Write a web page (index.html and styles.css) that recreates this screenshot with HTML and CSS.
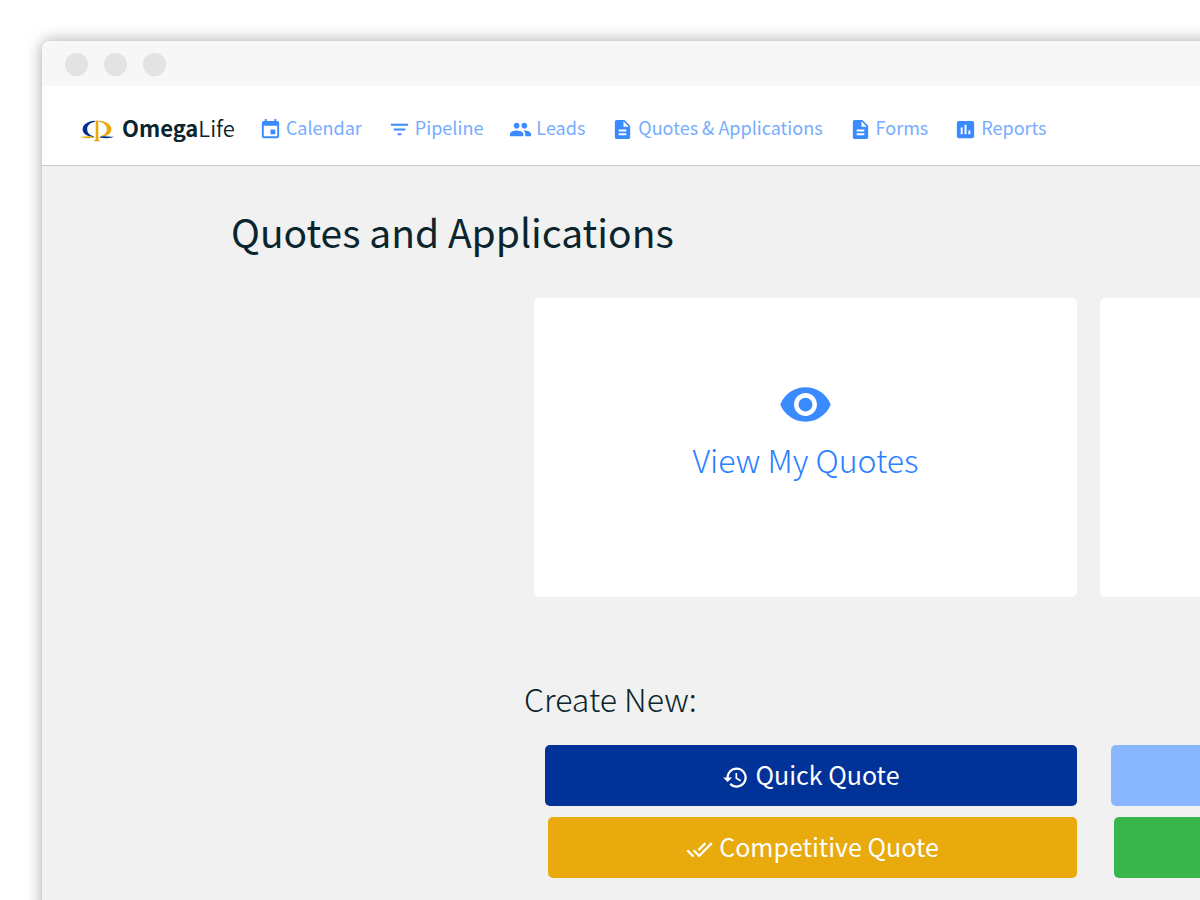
FILE: index.html
```html
<!DOCTYPE html>
<html lang="en">
<head>
<meta charset="utf-8">
<title>OmegaLife - Quotes and Applications</title>
<link rel="stylesheet" href="styles.css">
</head>
<body>
<div class="window">
  <div class="titlebar"><span class="dot"></span><span class="dot"></span><span class="dot"></span></div>
  <header class="navbar">
    <a class="brand" href="#">
      <svg class="brand-mark" viewBox="0 0 104 66" aria-hidden="true">
        <path fill="#012f96" d="M46 2C23 3 8 14 8 28c0 13 13 22 34 24v-3c-13-3-20-10-20-21C22 16 30 8 46 5z"/>
        <path fill="#e9a90b" d="M58 2c23 1 38 12 38 26 0 13-13 22-34 24v-3c13-3 20-10 20-21C82 16 74 8 58 5z"/>
        <path fill="#e9a90b" d="M0 50c12 2 22-2 33-1 6 1 11 3 14 5-10-1-15 0-23 1-10 0-20-1-24-5z"/>
        <path fill="#012f96" d="M104 50c-12 2-22-2-33-1-6 1-11 3-14 5 10-1 15 0 23 1 10 0 20-1 24-5z"/>
        <path fill="#e9a90b" d="M48 1h8v57l6 6H42l6-6z"/>
      </svg>
      <span class="brand-name"><b>Omega</b>Life</span>
    </a>
    <nav class="nav">
      <a class="nav-link" href="#"><svg class="icon" viewBox="0 0 24 24"><path d="M17 12h-5v5h5v-5zM16 1v2H8V1H6v2H5c-1.110 0-1.990.9-1.990 2L3 19c0 1.100.89 2 2 2h14c1.100 0 2-.9 2-2V5c0-1.100-.9-2-2-2h-1V1h-2zm3 18H5V8h14v11z"/></svg>Calendar</a>
      <a class="nav-link" href="#"><svg class="icon" viewBox="0 0 24 24"><path d="M10 18h4v-2h-4v2zM3 6v2h18V6H3zm3 7h12v-2H6v2z"/></svg>Pipeline</a>
      <a class="nav-link" href="#"><svg class="icon" viewBox="0 0 24 24"><path d="M16 11c1.660 0 2.990-1.340 2.990-3S17.660 5 16 5s-3 1.340-3 3 1.340 3 3 3zm-8 0c1.660 0 2.990-1.340 2.990-3S9.660 5 8 5 5 6.340 5 8s1.340 3 3 3zm0 2c-2.330 0-7 1.170-7 3.500V19h14v-2.500c0-2.330-4.670-3.500-7-3.500zm8 0c-.29 0-.62.02-.97.05 1.160.84 1.970 1.970 1.970 3.450V19h6v-2.500c0-2.330-4.670-3.500-7-3.500z"/></svg>Leads</a>
      <a class="nav-link" href="#"><svg class="icon" viewBox="0 0 24 24"><path d="M14 2H6c-1.100 0-1.990.9-1.990 2L4 20c0 1.100.89 2 1.990 2H18c1.100 0 2-.9 2-2V8l-6-6zm2 16H8v-2h8v2zm0-4H8v-2h8v2zm-3-5V3.500L18.500 9H13z"/></svg>Quotes &amp; Applications</a>
      <a class="nav-link" href="#"><svg class="icon" viewBox="0 0 24 24"><path d="M14 2H6c-1.100 0-1.990.9-1.990 2L4 20c0 1.100.89 2 1.990 2H18c1.100 0 2-.9 2-2V8l-6-6zm2 16H8v-2h8v2zm0-4H8v-2h8v2zm-3-5V3.500L18.500 9H13z"/></svg>Forms</a>
      <a class="nav-link" href="#"><svg class="icon" viewBox="0 0 24 24"><path d="M19 3H5c-1.100 0-2 .9-2 2v14c0 1.100.9 2 2 2h14c1.100 0 2-.9 2-2V5c0-1.100-.9-2-2-2zM9 17H7v-7h2v7zm4 0h-2V7h2v10zm4 0h-2v-4h2v4z"/></svg>Reports</a>
    </nav>
  </header>
  <main class="content">
    <h1 class="page-title">Quotes and Applications</h1>
    <section class="panel">
      <div class="columns">
        <a class="card" href="#">
          <svg class="card-icon" viewBox="0 0 24 24" aria-hidden="true"><path d="M12 4.500C7 4.500 2.730 7.610 1 12c1.730 4.390 6 7.500 11 7.500s9.270-3.110 11-7.500c-1.730-4.390-6-7.500-11-7.500zM12 17c-2.760 0-5-2.240-5-5s2.240-5 5-5 5 2.240 5 5-2.240 5-5 5zm0-8c-1.660 0-3 1.340-3 3s1.340 3 3 3 3-1.340 3-3-1.340-3-3-3z"/></svg>
          View My Quotes
        </a>
        <div class="card"></div>
      </div>
      <h2 class="section-title">Create New:</h2>
      <div class="columns">
        <button class="btn navy"><svg class="btn-icon" viewBox="0 0 24 24" aria-hidden="true"><path d="M13 3c-4.970 0-9 4.030-9 9H1l3.890 3.890.07.14L9 12H6c0-3.870 3.130-7 7-7s7 3.130 7 7-3.130 7-7 7c-1.930 0-3.680-.79-4.940-2.060l-1.420 1.420C8.270 19.990 10.510 21 13 21c4.970 0 9-4.030 9-9s-4.030-9-9-9zm-1 5v5l4.280 2.540.72-1.210-3.500-2.080V8H12z"/></svg>Quick Quote</button>
        <button class="btn sky" aria-label="More"></button>
        <button class="btn gold inset"><svg class="btn-icon" viewBox="0 0 24 24" aria-hidden="true"><path d="M18 7l-1.410-1.410-6.340 6.340 1.410 1.410L18 7zm4.240-1.410L11.660 16.170 7.480 12l-1.410 1.410L11.660 19l12-12-1.420-1.410zM.41 13.410L6 19l1.410-1.410L1.830 12 .41 13.410z"/></svg>Competitive Quote</button>
        <button class="btn green inset" aria-label="More"></button>
      </div>
    </section>
  </main>
</div>
</body>
</html>
```
FILE: styles.css
```css
* { box-sizing: border-box; }

body {
  margin: 0;
  padding: 41px 0 0 42px;
  min-height: 100vh;
  display: flex;
  background: #fff;
  color: #0a252d;
  font-family: "Noto Sans CJK SC", "Noto Sans", sans-serif;
  overflow: hidden;
}

a { text-decoration: none; }

.window {
  flex: 1;
  min-width: 0;
  margin: 0 -24px -24px 0;
  display: flex;
  flex-direction: column;
  background: #f1f1f1;
  border-top-left-radius: 8px;
  box-shadow: 0 0 16px rgba(0, 0, 0, 0.36);
}

.titlebar {
  display: flex;
  align-items: center;
  gap: 16px;
  height: 45px;
  padding: 2px 23px 0;
  background: #f7f7f7;
  border-top-left-radius: 8px;
}

.dot {
  width: 23px;
  height: 23px;
  border-radius: 50%;
  background: #e3e3e3;
}

.navbar {
  display: flex;
  align-items: center;
  gap: 24px;
  height: 80px;
  padding: 2px 38px 0;
  background: #fff;
  border-bottom: 1px solid #c9c9c9;
  white-space: nowrap;
}

.brand {
  display: flex;
  align-items: center;
  gap: 8px;
  color: #0a252d;
}

.brand-mark { width: 34px; height: 22px; margin-top: 8px; }
.brand-name { font-size: 22px; line-height: 32px; font-weight: 350; }
.brand-name b { font-weight: 700; }

.nav { display: flex; gap: 26px; }

.nav-link {
  display: flex;
  align-items: center;
  gap: 4px;
  color: #76adff;
  font-size: 18px;
  line-height: 28px;
}

.icon { width: 23px; height: 23px; fill: #3a8bff; margin-top: 5px; }

.content { padding-top: 35px; }

.page-title {
  margin: 0 0 37px 189px;
  font-size: 39px;
  line-height: 60px;
  font-weight: 400;
}

.panel { padding-left: 492px; }

.columns {
  display: grid;
  grid-template-columns: 543fr 124fr;
  gap: 11px 23px;
}

.card {
  display: flex;
  flex-direction: column;
  align-items: center;
  justify-content: center;
  height: 299px;
  padding-bottom: 35px;
  background: #fff;
  border-radius: 5px;
  color: #2b80ff;
  font-size: 32px;
  line-height: 48px;
  font-weight: 300;
}

.card-icon { width: 55px; height: 55px; fill: #3a8bff; margin-bottom: 3px; }

.section-title {
  margin: 76px 0 22px -10px;
  font-size: 32px;
  line-height: 50px;
  font-weight: 300;
}

.btn {
  display: flex;
  align-items: center;
  justify-content: center;
  gap: 6px;
  height: 61px;
  margin: 0 0 0 11px;
  padding: 0 0 4px;
  border: 0;
  border-radius: 5px;
  color: #fff;
  font-family: inherit;
  font-size: 25px;
  line-height: 36px;
  font-weight: 400;
}

.btn-icon { width: 27px; height: 27px; fill: #fff; margin-top: 7px; }
.inset { margin-left: 14px; }

.navy { background: #013297; }
.gold { background: #e8aa0c; }
.sky { background: #88b7ff; }
.green { background: #39b54d; }
```
